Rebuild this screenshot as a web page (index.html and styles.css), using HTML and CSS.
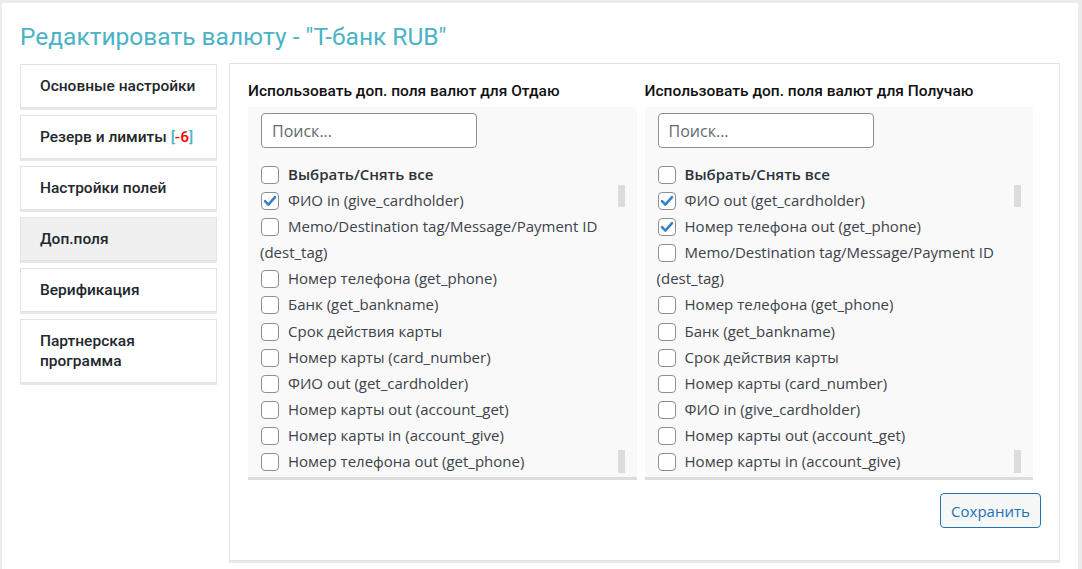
FILE: index.html
```html
<!DOCTYPE html>
<html lang="ru">
<head>
<meta charset="utf-8">
<title>Редактировать валюту</title>
<link rel="stylesheet" href="styles.css">
</head>
<body>
<div class="wrap">
  <h1 class="title">Редактировать валюту - "T-банк RUB"</h1>
  <div class="layout">
    <nav class="tabs">
      <div class="tab">Основные настройки</div>
      <div class="tab">Резерв и лимиты <span class="br">[</span><span class="neg">-6</span><span class="br">]</span></div>
      <div class="tab">Настройки полей</div>
      <div class="tab active">Доп.поля</div>
      <div class="tab">Верификация</div>
      <div class="tab">Партнерская программа</div>
    </nav>
    <section class="panel">
      <div class="cols">
        <div class="col">
          <div class="col-title">Использовать доп. поля валют для Отдаю</div>
          <div class="list-box">
            <input class="search" type="text" placeholder="Поиск...">
            <div class="items">
              <div class="item all"><span class="cb"></span>Выбрать/Снять все</div>
              <div class="item"><span class="cb checked"><svg viewBox="0 0 18 18"><path d="M4 9.2l3.4 3.4 6.6-7.4" fill="none" stroke="#3582c4" stroke-width="2.6" stroke-linecap="round" stroke-linejoin="round"/></svg></span>ФИО in (give_cardholder)</div>
              <div class="item"><span class="cb"></span>Memo/Destination tag/Message/Payment ID (dest_tag)</div>
              <div class="item"><span class="cb"></span>Номер телефона (get_phone)</div>
              <div class="item"><span class="cb"></span>Банк (get_bankname)</div>
              <div class="item"><span class="cb"></span>Срок действия карты</div>
              <div class="item"><span class="cb"></span>Номер карты (card_number)</div>
              <div class="item"><span class="cb"></span>ФИО out (get_cardholder)</div>
              <div class="item"><span class="cb"></span>Номер карты out (account_get)</div>
              <div class="item"><span class="cb"></span>Номер карты in (account_give)</div>
              <div class="item"><span class="cb"></span>Номер телефона out (get_phone)</div>
            </div>
            <span class="thumb thumb-top"></span>
            <span class="thumb thumb-bottom"></span>
          </div>
        </div>
        <div class="col">
          <div class="col-title">Использовать доп. поля валют для Получаю</div>
          <div class="list-box">
            <input class="search" type="text" placeholder="Поиск...">
            <div class="items">
              <div class="item all"><span class="cb"></span>Выбрать/Снять все</div>
              <div class="item"><span class="cb checked"><svg viewBox="0 0 18 18"><path d="M4 9.2l3.4 3.4 6.6-7.4" fill="none" stroke="#3582c4" stroke-width="2.6" stroke-linecap="round" stroke-linejoin="round"/></svg></span>ФИО out (get_cardholder)</div>
              <div class="item"><span class="cb checked"><svg viewBox="0 0 18 18"><path d="M4 9.2l3.4 3.4 6.6-7.4" fill="none" stroke="#3582c4" stroke-width="2.6" stroke-linecap="round" stroke-linejoin="round"/></svg></span>Номер телефона out (get_phone)</div>
              <div class="item"><span class="cb"></span>Memo/Destination tag/Message/Payment ID (dest_tag)</div>
              <div class="item"><span class="cb"></span>Номер телефона (get_phone)</div>
              <div class="item"><span class="cb"></span>Банк (get_bankname)</div>
              <div class="item"><span class="cb"></span>Срок действия карты</div>
              <div class="item"><span class="cb"></span>Номер карты (card_number)</div>
              <div class="item"><span class="cb"></span>ФИО in (give_cardholder)</div>
              <div class="item"><span class="cb"></span>Номер карты out (account_get)</div>
              <div class="item"><span class="cb"></span>Номер карты in (account_give)</div>
            </div>
            <span class="thumb thumb-top"></span>
            <span class="thumb thumb-bottom"></span>
          </div>
        </div>
      </div>
      <div class="actions">
        <button class="btn" type="button">Сохранить</button>
      </div>
    </section>
  </div>
</div>
</body>
</html>
```
FILE: styles.css
```css
* { box-sizing: border-box; }
html, body { margin: 0; padding: 0; }
body {
  background: #ececec;
  font-family: "Open Sans", "Noto Sans", sans-serif;
  color: #3c434a;
  height: 569px;
  overflow: hidden;
}
.wrap {
  margin: 3px 4px 0 2px;
  background: #fff;
  padding: 0 18px 20px 18px;
  min-height: 566px;
}
.title {
  margin: 0;
  padding: 18px 0 0 0;
  height: 60px;
  font-family: Roboto, "Liberation Sans", sans-serif;
  font-weight: 400;
  font-size: 24.5px;
  line-height: 32px;
  color: #4ab3c6;
}
.layout {
  display: flex;
  align-items: flex-start;
  gap: 12px;
}
.tabs {
  width: 197px;
  flex: none;
  display: flex;
  flex-direction: column;
  gap: 7px;
  margin-top: 1px;
}
.tab {
  border: 1px solid #e3e3e3;
  box-shadow: 0 2px 0 #e8e8e8;
  background: #fff;
  padding: 11px 19px;
  font-family: Roboto, "Liberation Sans", sans-serif;
  font-weight: 500;
  font-size: 15.5px;
  line-height: 20px;
  color: #23282d;
}
.tab.active { background: #f0f0f0; }
.tab .br { color: #4ab3c6; }
.tab .neg { color: #ff0000; }
.panel {
  flex: 1;
  border: 1px solid #e3e3e3;
  box-shadow: 0 2px 0 #e8e8e8;
  background: #fff;
  padding: 17px 18px 31px 18px;
  height: 498px;
}
.cols {
  display: flex;
  gap: 8px;
}
.col { width: 49%; }
.col-title {
  font-family: Roboto, "Liberation Sans", sans-serif;
  font-weight: 500;
  font-size: 15.5px;
  line-height: 20px;
  color: #111;
  margin-bottom: 6px;
  white-space: nowrap;
}
.list-box {
  position: relative;
  background: #f9f9f9;
  border-bottom: 3px solid #dcdcde;
  padding: 6px 13px 3px 12px;
  height: 373px;
  overflow: hidden;
}
.search {
  display: block;
  width: 216px;
  height: 35px;
  margin-left: 1px;
  border: 1px solid #8c8f94;
  border-radius: 4px;
  background: #fff;
  padding: 0 10px;
  font-family: "Open Sans", "Noto Sans", sans-serif;
  font-size: 16px;
  color: #2c3338;
}
.search::placeholder { color: #646970; }
.items {
  margin-top: 13px;
  font-size: 15px;
  line-height: 26.1px;
  color: #3c434a;
}
.item.all { font-weight: 600; color: #2c3338; }
.cb {
  display: inline-block;
  width: 18px;
  height: 18px;
  margin: 0 9px 0 1px;
  border: 1px solid #8c8f94;
  border-radius: 4px;
  background: #fff;
  vertical-align: -4px;
  position: relative;
}
.cb svg {
  position: absolute;
  left: -1px;
  top: -1px;
  width: 18px;
  height: 18px;
}
.thumb {
  position: absolute;
  right: 12px;
  width: 7px;
  background: #dcdcdc;
}
.thumb-top { top: 78px; height: 22px; }
.thumb-bottom { top: 343px; height: 23px; }
.actions {
  display: flex;
  justify-content: flex-end;
  margin-top: 13px;
}
.btn {
  height: 35px;
  width: 101px;
  border: 1px solid #2271b1;
  border-radius: 4px;
  background: #f6f7f7;
  color: #2271b1;
  font-family: "Open Sans", "Noto Sans", sans-serif;
  font-size: 15px;
  padding: 0 8px;
}
```
